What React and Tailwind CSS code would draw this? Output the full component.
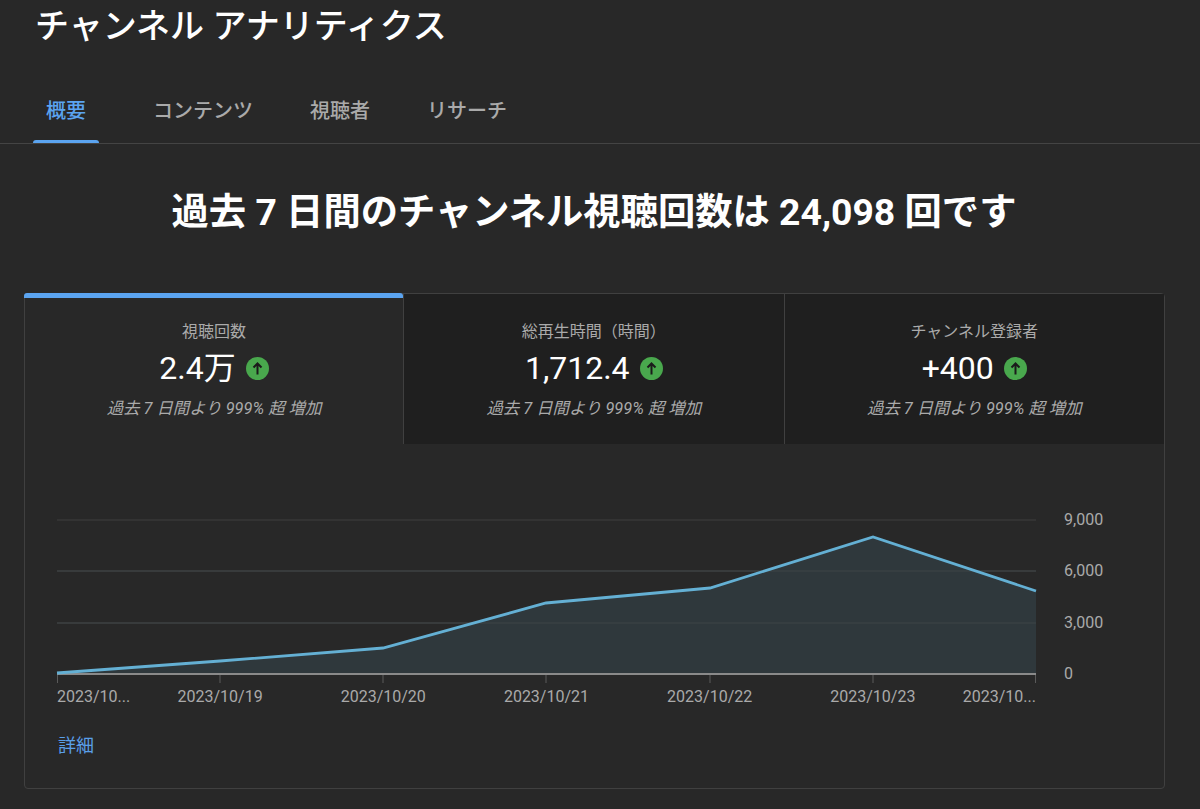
const stats = [
  { label: "視聴回数", value: "2.4万", active: true },
  { label: "総再生時間（時間）", value: "1,712.4" },
  { label: "チャンネル登録者", value: "+400" },
];
const tabs = ["概要", "コンテンツ", "視聴者", "リサーチ"];
const dates = ["2023/10...", "2023/10/19", "2023/10/20", "2023/10/21", "2023/10/22", "2023/10/23", "2023/10..."];
const ticks = [0, 163, 326, 489, 653, 816, 979];
const line = "0,158 163,146 326,133 489,88 653,73 816,22 979,76";

function Up() {
  return (
    <svg width="23" height="23" viewBox="0 0 23 23" className="shrink-0">
      <circle cx="11.5" cy="11.5" r="11.5" fill="#49a84d" />
      <path d="M11.5 17.5V6.5M7.5 10.5l4-4 4 4" fill="none" stroke="#1b1b1b" strokeWidth="2" />
    </svg>
  );
}

function Stat({ s }) {
  return (
    <div className={`relative flex h-[150px] flex-col items-center pt-[26px] ${s.active ? "w-[378px] bg-[#282828]" : "flex-1 border-l border-[#404040] bg-[#1f1f1f]"}`}>
      {s.active && <div className="absolute -left-px -top-px h-[5px] w-[379px] rounded-t-[3px] bg-[#5ba4f0]" />}
      <div className="text-[16px] leading-[24px] text-[#aaaaaa]">{s.label}</div>
      <div className="mt-[5px] flex h-[38px] items-center gap-[10px]">
        <span className="text-[32px] leading-[38px] text-white">{s.value}</span>
        <Up />
      </div>
      <div className="mt-[10px] text-[16.4px] italic leading-[24px] text-[#aaaaaa]">過去 7 日間より 999% 超 増加</div>
    </div>
  );
}

export default function App() {
  return (
    <div className="h-[809px] w-[1200px] overflow-hidden bg-[#282828] font-['Roboto','Noto_Sans_CJK_JP',sans-serif] text-white">
      <h1 className="pl-[35px] pt-[6px] text-[34px] font-medium leading-[40px]">チャンネル アナリティクス</h1>
      <div className="mt-[32px] flex h-[66px] items-stretch border-b border-[#444444] pl-[33px]">
        {tabs.map((t, i) => (
          <div key={t} className={`relative flex items-center text-[20px] font-medium ${i === 0 ? "mr-[54px] px-[13px] text-[#5ba4f0]" : "mr-[57px] text-[#aaaaaa]"}`}>
            {t}
            {i === 0 && <div className="absolute bottom-0 left-0 right-0 h-[3px] rounded-t-[3px] bg-[#5ba4f0]" />}
          </div>
        ))}
      </div>
      <h2 className="mt-[44px] pr-[12px] text-center text-[37.3px] font-bold leading-[48px]">過去 7 日間のチャンネル視聴回数は 24,098 回です</h2>
      <div className="ml-[24px] mt-[57px] h-[496px] w-[1141px] rounded-[4px] border border-[#404040]">
        <div className="flex">
          {stats.map((s) => <Stat key={s.label} s={s} />)}
        </div>
        <div className="ml-[32px] mt-[71px] flex">
          <svg width="980" height="170" viewBox="0 0 980 170" className="shrink-0 overflow-visible">
            <path d="M0 5H979M0 56H979M0 108H979" stroke="#3e3e3e" strokeWidth="1" />
            <polygon points={`${line} 979,159 0,159`} fill="#2f383c" />
            <path d="M0 56H979M0 108H979" stroke="#3e4446" strokeWidth="1" />
            <path d="M0 159H979" stroke="#8a8a8a" strokeWidth="2" />
            {ticks.map((x) => <path key={x} d={`M${x === 0 ? 0.5 : x === 979 ? 978.5 : x} 160V168`} stroke="#5a5a5a" strokeWidth="1" />)}
            <polyline points={line} fill="none" stroke="#64b0d4" strokeWidth="2.8" />
          </svg>
          <div className="ml-[27px] -mt-[5px] flex h-[174px] flex-col justify-between text-[16px] leading-[20px] text-[#aaaaaa]">
            {["9,000", "6,000", "3,000", "0"].map((v) => <div key={v} className="h-[20px]">{v}</div>)}
          </div>
        </div>
        <div className="ml-[32px] mt-[2px] grid w-[979px] grid-cols-[81.5px_repeat(5,163.2px)_81.5px] text-[16px] leading-[20px] text-[#aaaaaa]">
          {dates.map((d, i) => (
            <div key={i} className={`whitespace-nowrap ${i === 0 ? "text-left" : i === 6 ? "text-right" : "text-center"}`}>{d}</div>
          ))}
        </div>
        <div className="ml-[33px] mt-[27px] text-[18px] leading-[24px] text-[#5a9fe8]">詳細</div>
      </div>
    </div>
  );
}
